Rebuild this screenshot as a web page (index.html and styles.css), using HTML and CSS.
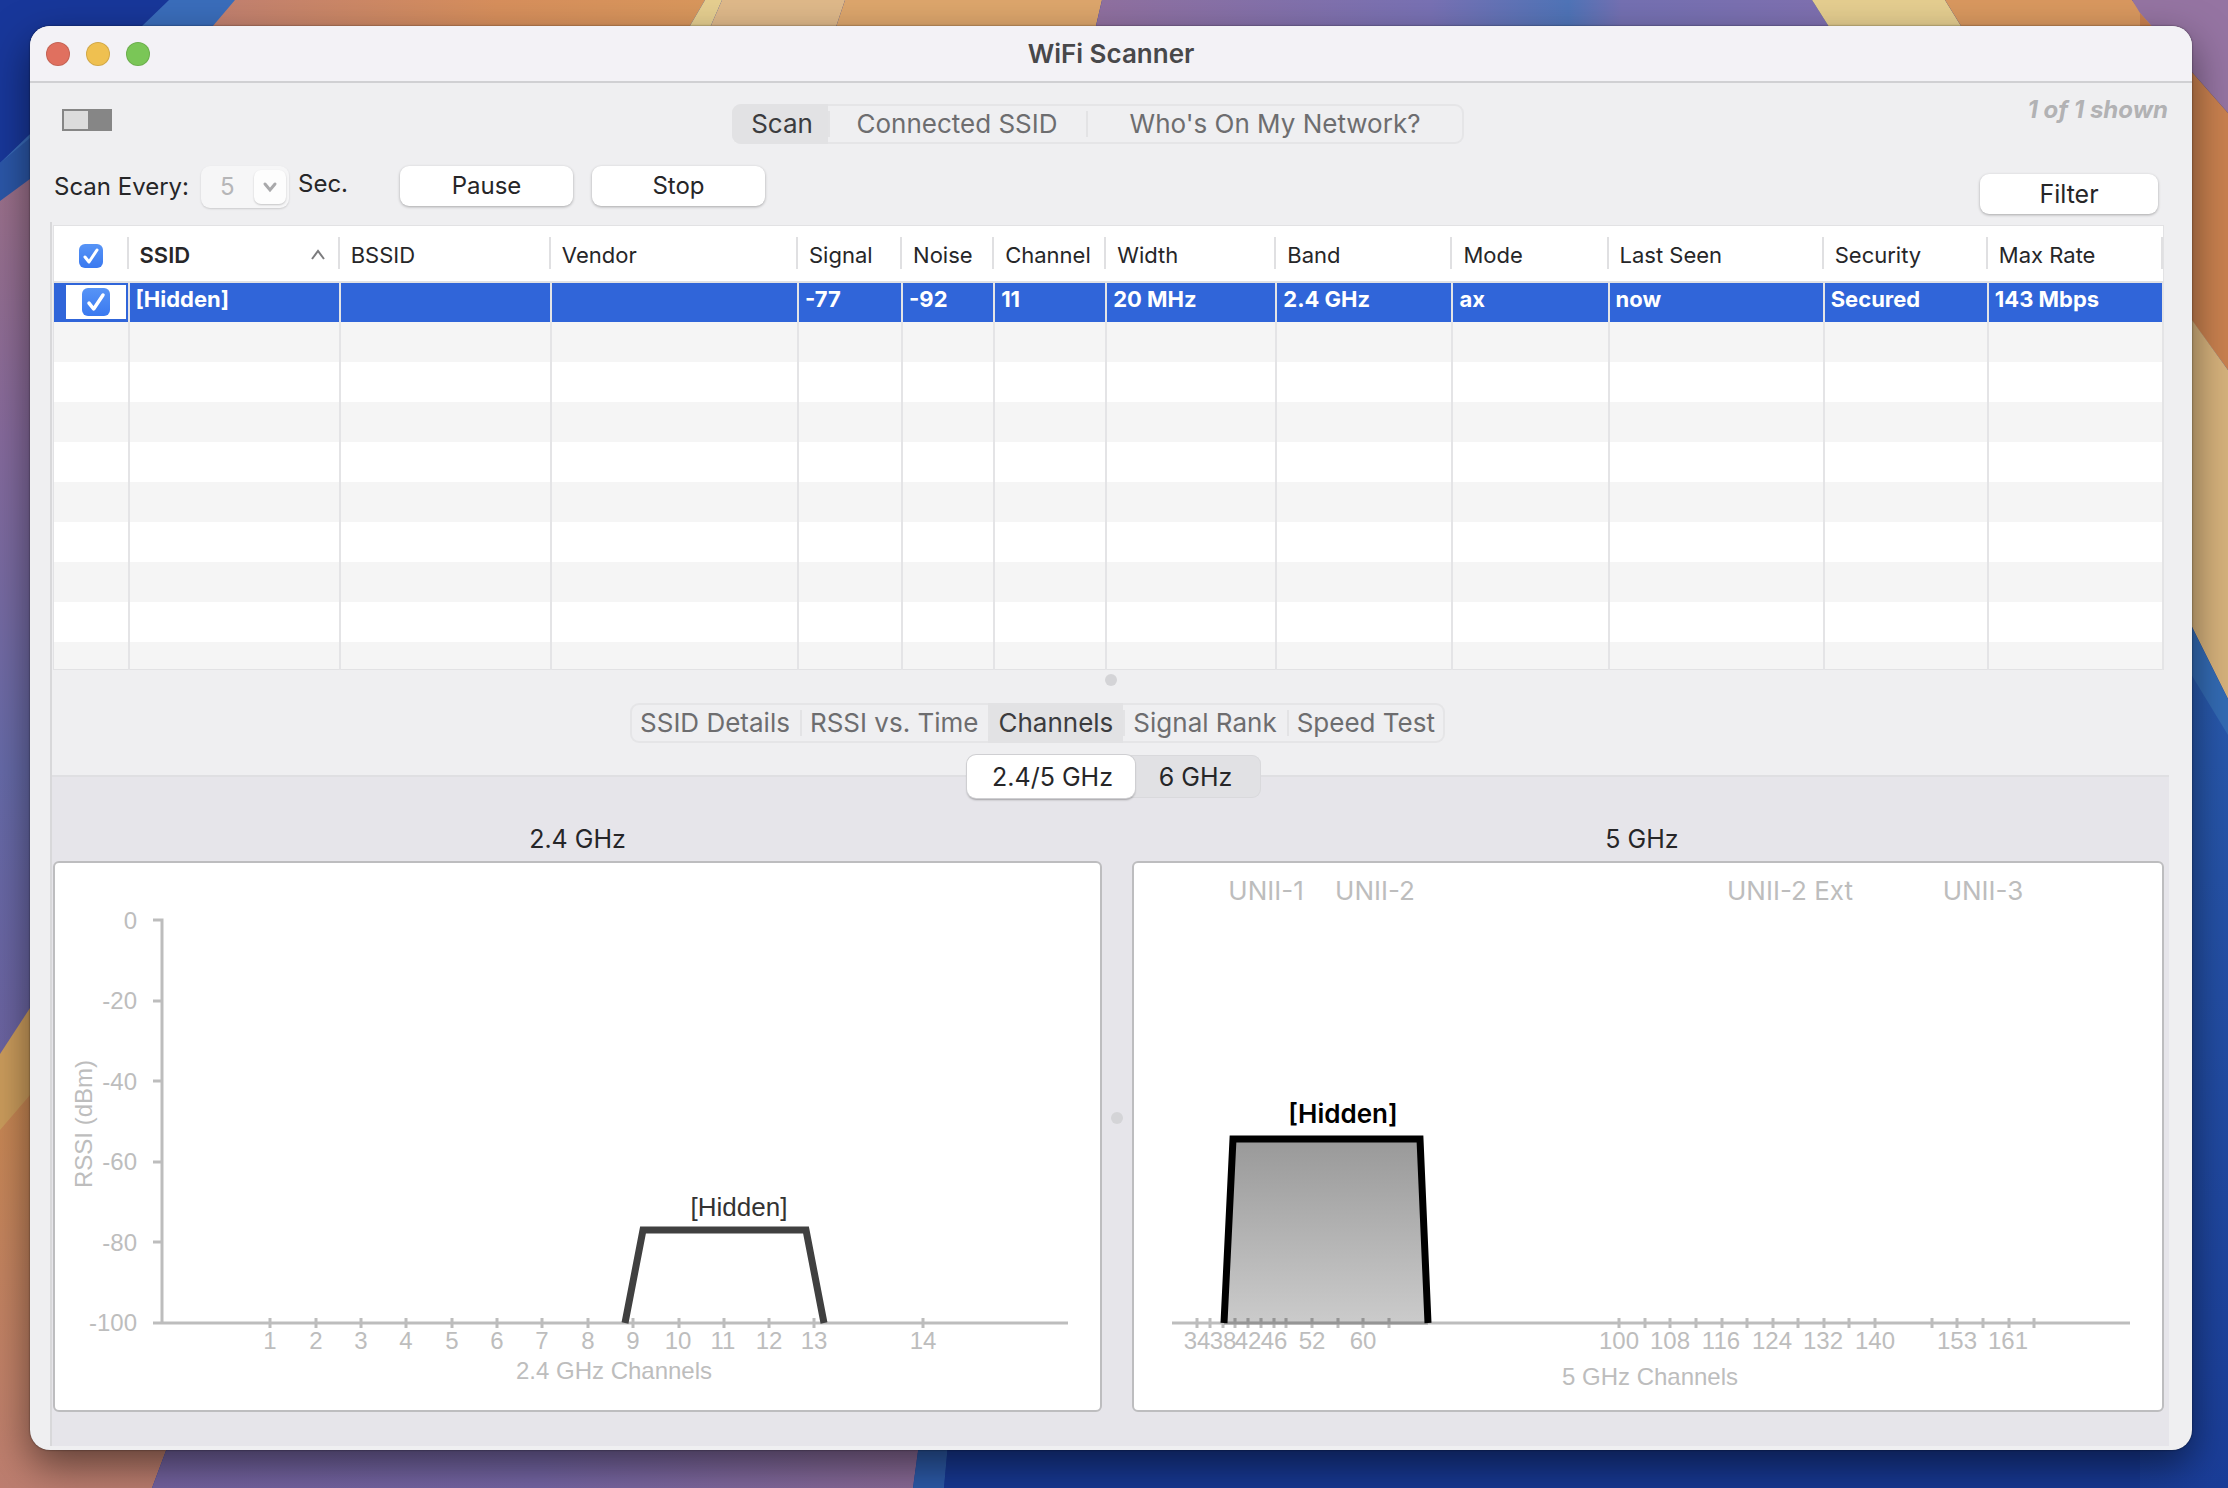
FILE: index.html
```
<!DOCTYPE html>
<html lang="en">

<head>
    <meta charset="UTF-8">
    <meta name="viewport" content="width=device-width, initial-scale=1.0">
    <title>WiFi Scanner</title>
    <link rel="stylesheet" href="styles.css">
</head>

<body>
    <!-- Desktop wallpaper -->
    <svg class="wallpaper" viewBox="0 0 2228 1488" preserveAspectRatio="none" aria-hidden="true">
        <defs>
            <linearGradient id="left-side" x1="0" y1="0" x2="0" y2="1">
                <stop offset="0" stop-color="#a27284" />
                <stop offset="0.35" stop-color="#866a9c" />
                <stop offset="0.7" stop-color="#666aa8" />
                <stop offset="1" stop-color="#6b63a0" />
            </linearGradient>
            <linearGradient id="left-warm" x1="0" y1="0" x2="0" y2="1">
                <stop offset="0" stop-color="#c98850" />
                <stop offset="1" stop-color="#bd7e70" />
            </linearGradient>
            <linearGradient id="top-warm" x1="0" y1="0" x2="1" y2="0">
                <stop offset="0" stop-color="#bf7f72" />
                <stop offset="0.6" stop-color="#d78f5c" />
                <stop offset="1" stop-color="#d9975c" />
            </linearGradient>
            <linearGradient id="top-purple" x1="0" y1="0" x2="1" y2="0">
                <stop offset="0" stop-color="#91709f" />
                <stop offset="0.45" stop-color="#7871b4" />
                <stop offset="0.63" stop-color="#4f74b8" />
                <stop offset="0.7" stop-color="#7470b2" />
                <stop offset="1" stop-color="#8070b0" />
            </linearGradient>
            <linearGradient id="right-blue" x1="0" y1="0" x2="0" y2="1">
                <stop offset="0" stop-color="#2a5cae" />
                <stop offset="1" stop-color="#1a3d98" />
            </linearGradient>
            <linearGradient id="bottom-purple" x1="0" y1="0" x2="1" y2="0">
                <stop offset="0" stop-color="#7463a0" />
                <stop offset="0.5" stop-color="#7566a5" />
                <stop offset="1" stop-color="#8a6a96" />
            </linearGradient>
        </defs>
        <rect width="2228" height="1488" fill="#18379a" />
        <path d="M0 163 169 0H250L0 260Z" fill="#3a6dbb" />
        <path d="M0 163 30 138V190L0 210Z" fill="#2b57a8" />
        <path d="M0 201 30 179 200 100V1000L0 1054Z" fill="url(#left-side)" />
        <path d="M235 0H705L670 60H184Z" fill="url(#top-warm)" />
        <path d="M705 0H722L696 60H670Z" fill="#e6cf90" />
        <path d="M722 0H845L825 60H696Z" fill="#dfb98a" />
        <path d="M845 0H1102L1088 60H825Z" fill="#dda66c" />
        <path d="M1102 0H1812L1850 60H1088Z" fill="url(#top-purple)" />
        <path d="M1812 0H1945L1982 60H1850Z" fill="#e5ce90" />
        <path d="M1945 0H2132L2180 60H1982Z" fill="#d9985f" />
        <path d="M2132 0H2228V113L2140 13Z" fill="#9574a2" />
        <path d="M2140 13 2228 113V370L2140 250Z" fill="#c9814f" />
        <path d="M2140 248 2228 370V699L2140 523Z" fill="#d6b27c" />
        <path d="M2140 523 2228 699V740H2140Z" fill="#336bb4" />
        <path d="M2140 590 2228 735V1488H2140Z" fill="url(#right-blue)" />
        <path d="M0 1054 60 962V1140L0 1140Z" fill="#cb9c5c" />
        <path d="M0 1130 60 1060V1400H185L152 1488H0Z" fill="url(#left-warm)" />
        <path d="M185 1400H925L913 1488H152Z" fill="url(#bottom-purple)" />
        <path d="M925 1400H952L944 1488H913Z" fill="#2c5aa8" />
        <path d="M952 1400H2140V1488H944Z" fill="#173893" />
    </svg>

    <main class="window">
        <header class="titlebar">
            <div class="lights">
                <button type="button" class="light close" aria-label="Close"></button>
                <button type="button" class="light minimize" aria-label="Minimize"></button>
                <button type="button" class="light zoom" aria-label="Zoom"></button>
            </div>
            <h1>WiFi Scanner</h1>
        </header>

        <section class="toolbar">
            <div class="toolbar-row views">
                <button type="button" class="power-switch" aria-label="Scanning on or off"></button>
                <nav class="segments main-segments">
                    <button type="button" class="active">Scan</button>
                    <button type="button">Connected SSID</button>
                    <button type="button">Who's On My Network?</button>
                </nav>
                <em class="shown">1 of 1 shown</em>
            </div>

            <div class="toolbar-row actions">
                <label class="scan-label" for="scan-interval">Scan Every:</label>
                <span class="interval">
                    <select id="scan-interval" disabled>
                        <option>5</option>
                    </select>
                    <span class="interval-arrow">
                        <svg viewBox="0 0 16 16" width="16" height="16"><path d="M3 5 8 11 13 5" /></svg>
                    </span>
                </span>
                <span class="unit">Sec.</span>
                <button type="button" class="btn pause">Pause</button>
                <button type="button" class="btn stop">Stop</button>
                <button type="button" class="btn filter">Filter</button>
            </div>
        </section>

        <section class="pane">
            <table class="networks">
                <colgroup>
                    <col class="c-check">
                    <col class="c-ssid">
                    <col class="c-bssid">
                    <col class="c-vendor">
                    <col class="c-signal">
                    <col class="c-noise">
                    <col class="c-channel">
                    <col class="c-width">
                    <col class="c-band">
                    <col class="c-mode">
                    <col class="c-seen">
                    <col class="c-security">
                    <col class="c-rate">
                </colgroup>
                <thead>
                    <tr>
                        <th class="check-all"><input type="checkbox" aria-label="Select all networks" checked></th>
                        <th class="sorted">
                            <span>SSID
                                <svg viewBox="0 0 16 12" width="16" height="12"><path d="M2 10 8 2 14 10" /></svg>
                            </span>
                        </th>
                        <th>BSSID</th>
                        <th>Vendor</th>
                        <th>Signal</th>
                        <th>Noise</th>
                        <th>Channel</th>
                        <th>Width</th>
                        <th>Band</th>
                        <th>Mode</th>
                        <th>Last Seen</th>
                        <th>Security</th>
                        <th>Max Rate</th>
                    </tr>
                </thead>
                <tbody>
                    <tr class="selected">
                        <td class="check"><span><input type="checkbox" aria-label="Show [Hidden]" checked></span></td>
                        <td>[Hidden]</td>
                        <td></td>
                        <td></td>
                        <td>-77</td>
                        <td>-92</td>
                        <td>11</td>
                        <td>20 MHz</td>
                        <td>2.4 GHz</td>
                        <td>ax</td>
                        <td>now</td>
                        <td>Secured</td>
                        <td>143 Mbps</td>
                    </tr>
                    <tr><td></td><td></td><td></td><td></td><td></td><td></td><td></td><td></td><td></td><td></td><td></td><td></td><td></td></tr>
                    <tr><td></td><td></td><td></td><td></td><td></td><td></td><td></td><td></td><td></td><td></td><td></td><td></td><td></td></tr>
                    <tr><td></td><td></td><td></td><td></td><td></td><td></td><td></td><td></td><td></td><td></td><td></td><td></td><td></td></tr>
                    <tr><td></td><td></td><td></td><td></td><td></td><td></td><td></td><td></td><td></td><td></td><td></td><td></td><td></td></tr>
                    <tr><td></td><td></td><td></td><td></td><td></td><td></td><td></td><td></td><td></td><td></td><td></td><td></td><td></td></tr>
                    <tr><td></td><td></td><td></td><td></td><td></td><td></td><td></td><td></td><td></td><td></td><td></td><td></td><td></td></tr>
                    <tr><td></td><td></td><td></td><td></td><td></td><td></td><td></td><td></td><td></td><td></td><td></td><td></td><td></td></tr>
                    <tr><td></td><td></td><td></td><td></td><td></td><td></td><td></td><td></td><td></td><td></td><td></td><td></td><td></td></tr>
                    <tr class="partial"><td></td><td></td><td></td><td></td><td></td><td></td><td></td><td></td><td></td><td></td><td></td><td></td><td></td></tr>
                </tbody>
            </table>

            <div class="splitter"><span class="grip"></span></div>

            <nav class="segments detail-segments">
                <button type="button">SSID Details</button>
                <button type="button">RSSI vs. Time</button>
                <button type="button" class="active">Channels</button>
                <button type="button">Signal Rank</button>
                <button type="button">Speed Test</button>
            </nav>

            <div class="channels">
                <div class="bands">
                    <button type="button" class="active">2.4/5 GHz</button>
                    <button type="button">6 GHz</button>
                </div>

                <div class="charts">
                    <figure>
                        <figcaption>2.4 GHz</figcaption>
                        <svg class="chart" viewBox="0 0 1045 547" role="img" aria-label="2.4 GHz channels">
                            <path class="axis" d="M98 57H107V460H1013M98 138H107M98 218H107M98 299H107M98 379H107M98 460H107" />
                            <path class="ticks" d="M215 455v10M261 455v10M306 455v10M351 455v10M397 455v10M442 455v10M487 455v10M533 455v10M578 455v10M624 455v10M669 455v10M714 455v10M759 455v10M868 455v10" />
                            <g class="y-labels">
                                <text x="82" y="66">0</text>
                                <text x="82" y="146">-20</text>
                                <text x="82" y="227">-40</text>
                                <text x="82" y="307">-60</text>
                                <text x="82" y="388">-80</text>
                                <text x="82" y="468">-100</text>
                            </g>
                            <g class="x-labels">
                                <text x="215" y="486">1</text>
                                <text x="261" y="486">2</text>
                                <text x="306" y="486">3</text>
                                <text x="351" y="486">4</text>
                                <text x="397" y="486">5</text>
                                <text x="442" y="486">6</text>
                                <text x="487" y="486">7</text>
                                <text x="533" y="486">8</text>
                                <text x="578" y="486">9</text>
                                <text x="623" y="486">10</text>
                                <text x="668" y="486">11</text>
                                <text x="714" y="486">12</text>
                                <text x="759" y="486">13</text>
                                <text x="868" y="486">14</text>
                                <text x="559" y="516">2.4 GHz Channels</text>
                                <text transform="translate(37 261) rotate(-90)">RSSI (dBm)</text>
                            </g>
                            <path class="network" d="M570 460 588 367H751L769 460" />
                            <text class="name" x="684" y="353">[Hidden]</text>
                        </svg>
                    </figure>

                    <span class="grip"></span>

                    <figure>
                        <figcaption class="shifted">5 GHz</figcaption>
                        <svg class="chart" viewBox="0 0 1028 547" role="img" aria-label="5 GHz channels">
                            <defs>
                                <linearGradient id="current-fill" x1="0" y1="0" x2="0" y2="1">
                                    <stop offset="0" stop-color="#999" />
                                    <stop offset="1" stop-color="#cbcbcb" />
                                </linearGradient>
                            </defs>
                            <g class="unii">
                                <text x="132" y="37">UNII-1</text>
                                <text x="241" y="37">UNII-2</text>
                                <text x="656" y="37">UNII-2 Ext</text>
                                <text x="849" y="37">UNII-3</text>
                            </g>
                            <path class="area" d="M90 460 99 276H286L294 460" />
                            <path class="axis" d="M38 460H996" />
                            <path class="ticks" d="M63 455v10M76 455v10M89 455v10M101 455v10M114 455v10M127 455v10M140 455v10M152 455v10M178 455v10M204 455v10M229 455v10M255 455v10M485 455v10M511 455v10M536 455v10M562 455v10M588 455v10M613 455v10M639 455v10M664 455v10M690 455v10M715 455v10M741 455v10M798 455v10M823 455v10M849 455v10M875 455v10M900 455v10" />
                            <path class="axis under" d="M90 460H294" />
                            <path class="ticks under" d="M101 455v5M114 455v5M127 455v5M140 455v5M152 455v5M178 455v5M204 455v5M229 455v5M255 455v5" />
                            <g class="x-labels">
                                <text x="63" y="486">34</text>
                                <text x="89" y="486">38</text>
                                <text x="114" y="486">42</text>
                                <text x="140" y="486">46</text>
                                <text x="178" y="486">52</text>
                                <text x="229" y="486">60</text>
                                <text x="485" y="486">100</text>
                                <text x="536" y="486">108</text>
                                <text x="587" y="486">116</text>
                                <text x="638" y="486">124</text>
                                <text x="689" y="486">132</text>
                                <text x="741" y="486">140</text>
                                <text x="823" y="486">153</text>
                                <text x="874" y="486">161</text>
                                <text x="516" y="522">5 GHz Channels</text>
                            </g>
                            <path class="network current" d="M90 460 99 276H286L294 460" />
                            <text class="name current" x="209" y="260">[Hidden]</text>
                        </svg>
                    </figure>
                </div>
            </div>
        </section>
    </main>
</body>

</html>
```
FILE: styles.css
```
* {
    box-sizing: border-box;
}

body {
    margin: 0;
    min-height: 100vh;
    padding: 26px 36px 38px 30px;
    display: flex;
    position: relative;
    background-color: #18379a;
    color: #262628;
    font-family: Inter, "Liberation Sans", sans-serif;
    font-size: 24px;
    line-height: 32px;
}

button,
select {
    font: inherit;
    color: inherit;
    margin: 0;
    padding: 0;
    border: none;
    background: none;
}

.wallpaper {
    position: absolute;
    inset: 0;
    width: 100%;
    height: 100%;
}

.window {
    position: relative;
    flex: 1;
    min-width: 0;
    display: flex;
    flex-direction: column;
    background-color: #efeff1;
    border-radius: 20px;
    overflow: hidden;
    box-shadow: 0 0 2px rgba(0, 0, 0, 0.6), 0 16px 40px rgba(0, 0, 0, 0.5);
}

/* Title bar */
.titlebar {
    display: grid;
    grid-template-columns: 1fr auto 1fr;
    align-items: center;
    height: 57px;
    padding: 0 16px;
    background-color: #f3f2f6;
    border-bottom: 2px solid #d0d0d3;
}

.titlebar h1 {
    margin: 0;
    font-size: 26px;
    font-weight: 600;
    color: #48484a;
}

.lights {
    display: flex;
    gap: 16px;
}

.light {
    width: 24px;
    height: 24px;
    border-radius: 50%;
    border: 1px solid rgba(0, 0, 0, 0.12);
}

.close {
    background-color: #e0705f;
}

.minimize {
    background-color: #efc050;
}

.zoom {
    background-color: #7ac657;
}

/* Toolbar */
.toolbar {
    padding: 21px 24px 8px;
}

.views {
    display: grid;
    grid-template-columns: 1fr auto 1fr;
    height: 40px;
    margin-bottom: 22px;
    padding-left: 8px;
}

.power-switch {
    width: 50px;
    height: 22px;
    margin-top: 5px;
    border: 2px solid #868686;
    background: linear-gradient(to right, #dcdcdc 24px, #868686 24px);
}

.shown {
    justify-self: end;
    margin-top: -10px;
    color: #b2b2b4;
    font-size: 24px;
    font-weight: 700;
}

.segments {
    display: flex;
    height: 40px;
    border-radius: 9px;
    box-shadow: inset 0 0 0 2px #e5e5e7;
    font-size: 26px;
    color: #6d6d6f;
    overflow: hidden;
}

.segments button {
    position: relative;
    white-space: nowrap;
}

.segments button + button::before {
    content: "";
    position: absolute;
    left: 0;
    top: 7px;
    width: 2px;
    height: 26px;
    background-color: #e3e3e5;
}

.segments .active {
    background-color: #e2e2e4;
    color: #3c3c3e;
}

.main-segments {
    margin-right: 34px;
}

.main-segments button:nth-child(1) {
    width: 96px;
    padding-left: 4px;
}

.main-segments button:nth-child(2) {
    width: 258px;
}

.main-segments button:nth-child(3) {
    width: 378px;
}

.actions {
    display: flex;
    align-items: flex-start;
    height: 48px;
}

.scan-label {
    width: 147px;
    padding-top: 5px;
    font-size: 24px;
    white-space: nowrap;
}

.interval {
    display: flex;
    position: relative;
    width: 88px;
    height: 42px;
    border-radius: 9px;
    background-color: #f6f6f7;
    box-shadow: 0 1px 2px rgba(0, 0, 0, 0.15);
}

.interval select {
    width: 100%;
    padding-left: 19px;
    appearance: none;
    color: #b6b6b8;
    opacity: 1;
}

.interval-arrow {
    position: absolute;
    right: 3px;
    top: 4px;
    display: flex;
    align-items: center;
    justify-content: center;
    width: 32px;
    height: 34px;
    border-radius: 7px;
    background-color: #fdfdfd;
    box-shadow: 0 1px 2px rgba(0, 0, 0, 0.2);
    pointer-events: none;
}

.interval-arrow path {
    fill: none;
    stroke: #a9a9ab;
    stroke-width: 3;
    stroke-linecap: round;
}

.unit {
    width: 111px;
    padding: 2px 0 0 9px;
    font-size: 24px;
}

.btn {
    width: 173px;
    height: 40px;
    border-radius: 9px;
    background-color: #fff;
    box-shadow: 0 1px 3px rgba(0, 0, 0, 0.3);
}

.stop {
    margin-left: 19px;
}

.filter {
    width: 178px;
    align-self: flex-end;
    margin-left: auto;
    margin-right: 10px;
    font-size: 25px;
}

/* Table */
.pane {
    flex: 1;
    display: flex;
    flex-direction: column;
    margin: 0 23px 4px 20px;
    padding-top: 3px;
    border-left: 2px solid #d8d8da;
}

.networks {
    width: calc(100% - 6px);
    margin-left: 1px;
    table-layout: fixed;
    border-collapse: collapse;
    border: 1px solid #e2e2e4;
    background-color: #fff;
    font-size: 22px;
    line-height: 26px;
}

.c-check { width: 75px; }
.c-ssid { width: 211px; }
.c-bssid { width: 211px; }
.c-vendor { width: 247px; }
.c-signal { width: 104px; }
.c-noise { width: 92px; }
.c-channel { width: 112px; }
.c-width { width: 170px; }
.c-band { width: 176px; }
.c-mode { width: 156px; }
.c-seen { width: 215px; }
.c-security { width: 164px; }
.c-rate { width: 175px; }

.networks th {
    height: 56px;
    padding: 3px 0 0 11px;
    font-weight: 400;
    text-align: left;
    white-space: nowrap;
    border-bottom: 2px solid #e2e2e4;
    background: linear-gradient(#e0e0e2, #e0e0e2) right center / 2px 32px no-repeat;
}

.networks .check-all {
    padding-left: 0;
    text-align: center;
}

.networks .sorted {
    padding-right: 14px;
    font-weight: 600;
}

.sorted span {
    display: flex;
    align-items: center;
    justify-content: space-between;
}

.sorted path {
    fill: none;
    stroke: #7c7c7e;
    stroke-width: 2;
}

.networks td {
    height: 40px;
    padding: 0 0 6px 6px;
    border-right: 2px solid #e4e4e6;
    white-space: nowrap;
}

.networks tbody tr:nth-child(even) {
    background-color: #f5f5f5;
}

.networks tbody .selected {
    background-color: #3065d9;
    color: #fff;
    font-weight: 700;
}

.networks .partial td {
    height: 28px;
}

.networks .check {
    padding: 0 2px 0 12px;
}

.check span {
    display: flex;
    align-items: center;
    justify-content: center;
    height: 34px;
    background-color: #fff;
}

.networks input {
    appearance: none;
    display: inline-block;
    width: 24px;
    height: 24px;
    margin: 0;
    vertical-align: middle;
    border-radius: 6px;
    background: url("data:image/svg+xml,%3Csvg xmlns='http://www.w3.org/2000/svg' viewBox='0 0 24 24'%3E%3Cpath d='M6 13 10 18 18 6' fill='none' stroke='white' stroke-width='3' stroke-linecap='round' stroke-linejoin='round'/%3E%3C/svg%3E") center / 100% no-repeat, linear-gradient(#5794f6, #3a79f0);
}

.networks .check input {
    width: 28px;
    height: 28px;
}

.splitter {
    display: flex;
    justify-content: center;
    height: 33px;
    padding-top: 4px;
}

.grip {
    width: 12px;
    height: 12px;
    border-radius: 50%;
    background-color: #d4d4d7;
}

.detail-segments {
    align-self: center;
    margin-right: 146px;
}

.detail-segments button {
    padding: 0 10px;
}

/* Channel charts */
.channels {
    flex: 1;
    display: flex;
    flex-direction: column;
    margin-top: 32px;
    border-top: 2px solid #dfdfe2;
    background-color: #e6e5ea;
}

.bands {
    align-self: center;
    display: flex;
    height: 43px;
    margin-top: -22px;
    margin-left: 6px;
    border-radius: 9px;
    background-color: #e1e1e4;
    box-shadow: inset 0 0 0 1px #d9d9dc;
    font-size: 25px;
}

.bands button {
    width: 126px;
    padding-right: 4px;
}

.bands .active {
    width: 168px;
    padding: 0 0 0 4px;
    border-radius: 9px;
    background-color: #fff;
    box-shadow: 0 0 0 1px #cfcfd2, 0 2px 2px rgba(0, 0, 0, 0.3);
}

.charts {
    display: grid;
    grid-template-columns: 1049fr 30px 1032fr;
    align-items: center;
    justify-items: center;
    padding: 25px 5px 0 1px;
}

.charts figure {
    width: 100%;
    margin: 0;
}

.charts figcaption {
    margin-bottom: 6px;
    font-size: 25px;
    text-align: center;
}

.charts .shifted {
    padding-right: 12px;
}

.chart {
    display: block;
    width: 100%;
    background-color: #fff;
    border: 2px solid #bdbdbf;
    border-radius: 6px;
    font-family: "Liberation Sans", Arial, sans-serif;
    font-size: 24px;
}

.axis {
    fill: none;
    stroke: #bdbdbd;
    stroke-width: 3;
}

.ticks {
    stroke: #bdbdbd;
    stroke-width: 3;
}

.under {
    stroke: #959595;
}

.chart text {
    text-anchor: middle;
}

.y-labels,
.x-labels,
.unii {
    fill: #bdbdbd;
}

.chart .y-labels text {
    text-anchor: end;
}

.unii {
    font-family: Inter, "Liberation Sans", sans-serif;
    font-size: 26px;
}

.network {
    fill: none;
    stroke: #404040;
    stroke-width: 7;
}

.network.current {
    stroke: #000;
}

.area {
    fill: url(#current-fill);
}

.name {
    font-size: 26px;
    fill: #333;
}

.name.current {
    font-family: Inter, "Liberation Sans", sans-serif;
    font-weight: 600;
    fill: #000;
}
```
